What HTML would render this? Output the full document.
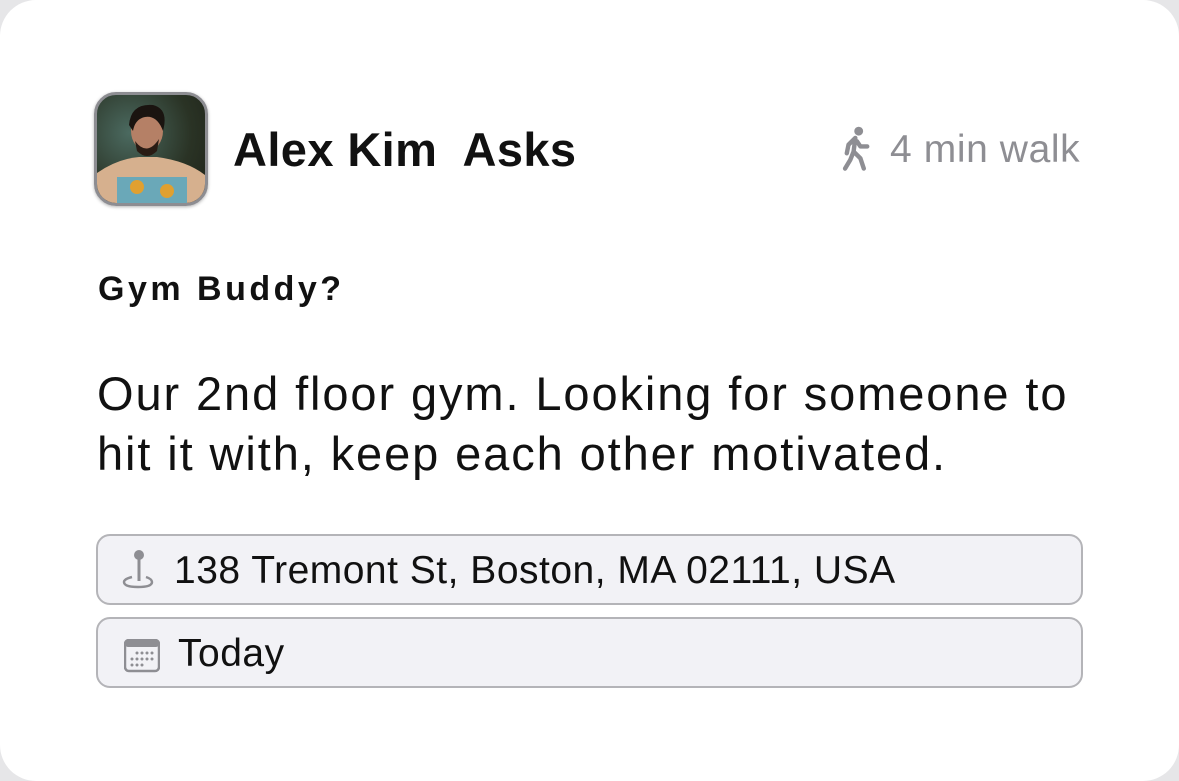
<!DOCTYPE html>
<html><head><meta charset="utf-8"><style>
html,body{margin:0;padding:0;width:1179px;height:781px;overflow:hidden;background:#e6e6e8;}
.card{position:absolute;left:0;top:0;width:1179px;height:781px;background:#fff;border-radius:36px;font-family:"Liberation Sans",sans-serif;}
.av{position:absolute;left:94px;top:92px;width:108px;height:108px;border:3px solid #8d8d92;border-radius:22px;overflow:hidden;background:radial-gradient(circle at 30% 35%,#4b6a60,#2a3325 60%,#1e2218);box-shadow:0 1px 3px rgba(0,0,0,.3);}
.name{position:absolute;left:233px;top:122px;font-size:47px;letter-spacing:0.4px;font-weight:bold;color:#111;white-space:pre;}
.walk{position:absolute;left:890px;top:128px;font-size:39px;letter-spacing:0.6px;color:#8e8e93;}
.title{position:absolute;left:98px;top:270px;font-size:34px;letter-spacing:3.5px;font-weight:bold;color:#111;white-space:nowrap;}
.body{position:absolute;left:97px;top:364px;font-size:47px;letter-spacing:1.9px;line-height:60px;color:#111;width:1100px;white-space:nowrap;}
.box{position:absolute;left:96px;width:983px;height:67px;border:2px solid #b4b4b8;border-radius:14px;background:#f2f2f6;font-size:39px;letter-spacing:0.5px;color:#111;white-space:nowrap;}
.box span{position:absolute;top:13px;}
</style></head><body><div class="card">
<div class="av">
<svg width="108" height="108" viewBox="0 0 108 108">
<path d="M0 108 L0 78 Q20 64 42 62 L60 62 Q90 66 108 80 L108 108Z" fill="#d6b08e"/>
<rect x="20" y="82" width="70" height="26" fill="#6aa8b8"/>
<circle cx="40" cy="92" r="7" fill="#e0a030"/><circle cx="70" cy="96" r="7" fill="#e0a030"/>
<ellipse cx="50" cy="36" rx="16" ry="20" fill="#b58066"/>
<path d="M32 30 Q34 8 56 10 Q72 14 66 36 Q60 20 48 22 Q38 24 36 36Z" fill="#1a1410"/>
<path d="M38 46 Q50 62 62 44 L60 56 Q50 66 40 56Z" fill="#2a1c14"/>
</svg></div>
<div class="name">Alex Kim  Asks</div>
<svg style="position:absolute;left:840px;top:126px" width="34" height="46" viewBox="0 0 20 27">
<circle cx="11" cy="3" r="2.6" fill="#8e8e93"/>
<path d="M9 7 L5 11 L4 16 M9 7 L8 15 L12 19 L14 25 M8 15 L6 20 L3 25 M10 9 L12 12 L16 12" stroke="#8e8e93" stroke-width="2.6" fill="none" stroke-linecap="round" stroke-linejoin="round"/>
</svg>
<div class="walk">4 min walk</div>
<div class="title">Gym Buddy?</div>
<div class="body">Our 2nd floor gym. Looking for someone to<br>hit it with, keep each other motivated.</div>
<div class="box" style="top:534px">
<svg style="position:absolute;left:22px;top:12px" width="36" height="42" viewBox="0 0 36 42">
<circle cx="19" cy="7" r="5" fill="#8e8e93"/><line x1="19" y1="11" x2="19" y2="33" stroke="#8e8e93" stroke-width="3"/>
<path d="M12 29 Q4 31 4 34 Q4 39 18 39 Q32 39 32 34 Q32 31 26 29" stroke="#8e8e93" stroke-width="2.5" fill="none"/>
</svg>
<span style="left:76px">138 Tremont St, Boston, MA 02111, USA</span></div>
<div class="box" style="top:617px">
<svg style="position:absolute;left:26px;top:20px" width="36" height="34" viewBox="0 0 36 34">
<rect x="1" y="1" width="34" height="31" rx="4" fill="#f2f2f6" stroke="#8e8e93" stroke-width="2.5"/>
<rect x="1" y="1" width="34" height="7" rx="3" fill="#8e8e93"/>
<g fill="#8e8e93"><circle cx="13" cy="14" r="1.5"/><circle cx="18" cy="14" r="1.5"/><circle cx="23" cy="14" r="1.5"/><circle cx="28" cy="14" r="1.5"/>
<circle cx="8" cy="20" r="1.5"/><circle cx="13" cy="20" r="1.5"/><circle cx="18" cy="20" r="1.5"/><circle cx="23" cy="20" r="1.5"/><circle cx="28" cy="20" r="1.5"/>
<circle cx="8" cy="26" r="1.5"/><circle cx="13" cy="26" r="1.5"/><circle cx="18" cy="26" r="1.5"/></g>
</svg>
<span style="left:80px">Today</span></div>
</div></body></html>
